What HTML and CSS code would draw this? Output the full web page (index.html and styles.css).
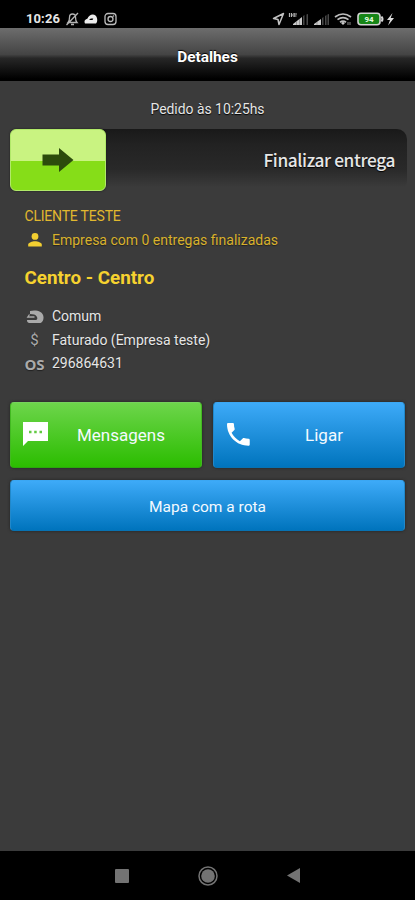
FILE: index.html
```html
<!DOCTYPE html>
<html lang="pt-BR">
<head>
<meta charset="utf-8">
<title>Detalhes</title>
<link rel="stylesheet" href="styles.css">
</head>
<body>
<div class="status">
  <span class="clock">10:26</span>
  <svg class="left-icons" width="54" height="16" viewBox="0 0 54 16">
    <g fill="none" stroke="#b4b4b4" stroke-width="1.300"><path d="M3 11.500h9c-1.500-1.500-1.500-3-1.500-5.500 0-2-1.200-3-3-3S4.500 4 4.500 6.500c0 2 0 3.500-1.500 5zM6 13.500h3M1.500 14 13 2"/></g>
    <path d="M20 12.500c-1.300-3 .5-4 2.500-5C23.500 4 28 2 30.500 4.500c2 2 2.500 6 .5 8zM24 9h3.500l.8-1.500h-2.500z" fill="#ececec" fill-rule="evenodd"/>
    <g fill="none" stroke="#bcbcbc" stroke-width="1.300"><rect x="40" y="2.500" width="11" height="11" rx="3"/><circle cx="45.500" cy="8" r="2.500"/></g><circle cx="48.500" cy="5" r=".8" fill="#c8c8c8"/>
  </svg>
  <svg class="right-icons" width="126" height="16" viewBox="0 0 126 16">
    <path d="M1.500 7.500 11.500 2.500 7 13.500 6 8.500z" fill="none" stroke="#c2c2c2" stroke-width="1.500" stroke-linejoin="round"/>
    <path d="M17.500 2v4M19.500 2v4M19 4h2M22 2v4M22 3h3M22 5h2.500" stroke="#b5b5b5" stroke-width="1.200"/>
    <path d="M21 14v-1l9-7v8z" fill="#cacaca"/><path d="M24.500 10v4M27.500 8v6" stroke="#777" stroke-width=".6"/><path d="M31 14V5l1.500-1v10zM34.500 14V3.500L36 3v11z" fill="#484848"/>
    <path d="M42 14v-1l7-5v6z" fill="#cacaca"/><path d="M45 11v3" stroke="#777" stroke-width=".6"/><path d="M50 14V7l1.500-1v8zM53 14V5l1.500-1v10zM55.500 14V3.500L57 3v11z" fill="#484848"/>
    <g transform="translate(2.500 0)"><g fill="none" stroke="#bdbdbd" stroke-width="1.700"><path d="M60.500 6q8-6 16 0M63 8.600q5.500-4 11 0M65.500 11.200q3-2.200 6 0"/></g><path d="m66.500 12 2-1.200 2 1.200-2 2z" fill="#ccc"/><path d="M73.500 11v3M75.500 11v3" stroke="#888"/></g>
    <rect x="86" y="2.200" width="22" height="11.600" rx="3" fill="#168516" stroke="#d4d4d4" stroke-width="1.600"/><path d="M109.500 5.500q2 2.500 0 5" fill="none" stroke="#d4d4d4" stroke-width="2"/>
    <text x="97" y="11" class="battery-label">94</text>
    <path d="m120.500 2-5.500 7h3l-2 5.500 6-7.500h-3.300z" fill="#ddd"/>
  </svg>
</div>
<header class="title-bar">Detalhes</header>
<main class="content">
  <p class="order-time"><span>Pedido às 10:25hs</span></p>
  <div class="slider">
    <div class="handle"><svg width="32" height="26" viewBox="0 0 32 26"><path d="M.5 7.500H17V1l14.500 12L17 25v-6.500H.5z" fill="#2c4b0c"/></svg></div>
    <span class="slider-text">Finalizar entrega</span>
  </div>
  <section class="details">
    <div class="client">CLIENTE TESTE</div>
    <div class="row company"><span class="icon"><svg width="16" height="16" viewBox="0 0 16 16"><circle cx="8" cy="4.400" r="3.400" fill="#f3cf31"/><path d="M1.200 14.500v-2c0-2 4-3.300 6.800-3.300s6.800 1.300 6.800 3.300v2z" fill="#f3cf31"/></svg></span><span class="company-text">Empresa com 0 entregas finalizadas</span></div>
    <h2 class="place">Centro - Centro</h2>
    <div class="row"><span class="icon"><svg class="helmet" width="18" height="14" viewBox="0 0 18 14"><path d="M4 1C9-.3 17 .5 17.500 7c.2 3-1 5-3 6H3C1.500 12.700 1 11.500 1 10h9.200c1.300-.7 1.500-2 .5-3.500C9.500 4.700 7.500 4 4 4z" fill="#aaa"/><path d="M3.500 4.500 1.800 7h6.700" fill="none" stroke="#aaa" stroke-width="1.300"/></svg></span><span class="type-text">Comum</span></div>
    <div class="row"><span class="icon dollar">$</span><span class="bill-text">Faturado (Empresa teste)</span></div>
    <div class="row"><span class="icon os">OS</span><span class="num-text">296864631</span></div>
  </section>
  <div class="actions">
    <div class="button green"><svg class="btn-icon" width="26" height="26" viewBox="0 0 26 26"><path d="M0 0h25v19H5L0 24z" fill="#fff"/><path d="M6 8.700h2.500v2.500H6zM11.200 8.700h2.500v2.500h-2.500zM16.500 8.700H19v2.500h-2.500z" fill="#62ca42"/></svg><span class="msg-label">Mensagens</span></div>
    <div class="button blue"><svg class="btn-icon" width="24" height="24" viewBox="3 3 19 19"><path d="M6.620 10.790c1.440 2.830 3.760 5.140 6.590 6.590l2.200-2.200c.27-.27.67-.36 1.020-.24 1.120.37 2.330.57 3.570.57.550 0 1 .45 1 1V20c0 .55-.45 1-1 1-9.390 0-17-7.610-17-17 0-.55.450-1 1-1h3.500c.55 0 1 .45 1 1 0 1.250.2 2.450.57 3.570.11.350.03.740-.25 1.020z" fill="#fff"/></svg><span class="call-label">Ligar</span></div>
  </div>
  <div class="button blue map"><span>Mapa com a rota</span></div>
</main>
<nav class="nav">
  <svg width="14" height="14"><rect width="14" height="14" rx="1" fill="#737373"/></svg>
  <svg width="20" height="20"><circle cx="10" cy="10" r="9" fill="none" stroke="#737373" stroke-width="1.500"/><circle cx="10" cy="10" r="6.800" fill="#737373"/></svg>
  <svg width="13" height="15"><path d="M13 0v15L0 7.500z" fill="#737373"/></svg>
</nav>
</body>
</html>
```
FILE: styles.css
```css
* { box-sizing: border-box; }
body { margin: 0; width: 415px; height: 900px; background: #3b3b3b; color: #e6e6e6; font-family: Roboto, sans-serif; display: flex; flex-direction: column; overflow: hidden; white-space: nowrap; }
.status { height: 28px; background: #000; display: flex; align-items: center; padding: 10px 17px 0 26px; }
.clock { font-size: 13px; font-weight: 700; width: 39px; letter-spacing: .1px; line-height: 16px; }
.right-icons { margin-left: auto; }
.battery-label { font: 700 8px Roboto, sans-serif; fill: #e3ffe1; text-anchor: middle; }
.title-bar { height: 53px; background: linear-gradient(#6d6d6d, #444 50%, #272727 57%, #000 96%); display: flex; align-items: center; justify-content: center; padding-top: 4px; color: #fff; font-size: 15.400px; font-weight: 700; text-shadow: 0 -1px 1px #000; }
.content { flex: 1; padding: 19px 10px 0; }
.order-time { margin: 0; height: 29px; line-height: 18px; text-align: center; font-size: 13.900px; text-shadow: 0 1px 1px #000; }
.slider { height: 62px; width: 397px; display: flex; align-items: center; justify-content: space-between; padding-right: 12px; border-radius: 10px; background: linear-gradient(#191919, #222 25%, #292929 65%, #3b3b3b 94%); }
.handle { width: 96px; height: 62px; border-radius: 6px; background: linear-gradient(#c9f381 51%, #86dd18 51%); border: 1px solid #b1e969; display: flex; align-items: center; justify-content: center; box-shadow: 0 0 2px #181818; }
.slider-text { font: 500 17.300px/24px "Noto Sans CJK SC", sans-serif; letter-spacing: -.38px; padding-bottom: 1px; text-shadow: 0 1px 1px #000; }
.details { padding: 13px 14px 0 14.500px; height: 211px; font-size: 14px; }
.client { height: 24px; line-height: 24px; color: #e2b82e; font-size: 14px; letter-spacing: -.2px; }
.row { height: 23.500px; display: flex; align-items: center; text-shadow: 0 1px 1px #222; }
.icon { width: 20px; margin-right: 7.500px; display: flex; justify-content: center; color: #aaa; }
.company { color: #d9b12c; }
.place { margin: 13.500px 0 12.500px; line-height: 27px; font-size: 18.800px; color: #f6d22f; }
.helmet { margin-top: 2px; }
.dollar { font-size: 15px; padding-top: 1px; }
.os { font: 700 15px/20px "Open Sans", sans-serif; padding-top: 1px; }
.actions { display: grid; grid-template-columns: 192px 192px; gap: 11px; margin-bottom: 12px; }
.button { height: 66px; border-radius: 4px; border: 1px solid; display: flex; align-items: center; padding-left: 12px; color: #f4faff; font-size: 17px; box-shadow: 0 0 3px #202020; }
.green { background: linear-gradient(#6dd54b, #2bbd00); border-color: #76d35c #42b921 #2ba80d; }
.blue { background: linear-gradient(#3daaf8, #0074bd); border-color: #3ba7f3 #2188ca #0872b2; }
.btn-icon { flex: none; width: 26px; }
.button span { flex: 1; text-align: center; padding-right: 8px; }
.map { height: 51px; width: 395px; padding: 2px 0 0; font-size: 15.500px; }
.map span { padding: 0; }
.nav { height: 49px; background: #000; display: grid; grid-template-columns: 86px 86px 84px; justify-content: center; align-items: center; justify-items: center; padding-right: 1px; }
```
